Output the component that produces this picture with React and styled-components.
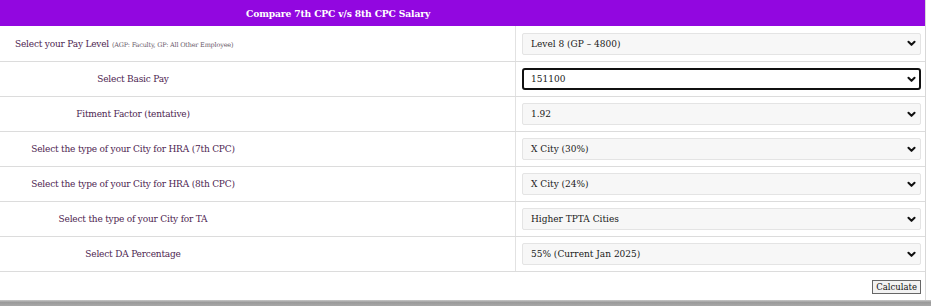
import React from 'react';
import styled, { createGlobalStyle } from 'styled-components';

const GlobalStyle = createGlobalStyle`
  html, body {
    margin: 0;
    padding: 0;
    background: #fff;
  }
  body {
    font-family: Georgia, "DejaVu Serif", "Liberation Serif", serif;
  }
`;

const Page = styled.div`
  width: 931px;
  height: 306px;
  background: #fff;
  display: flex;
  flex-direction: column;
`;

const Table = styled.div`
  width: 925px;
  border-right: 1px solid #d8d8d8;
  flex: 1;
  display: flex;
  flex-direction: column;
`;

const Header = styled.div`
  height: 26px;
  background: #9207e0;
  color: #fff;
  font-family: "DejaVu Serif", serif;
  font-weight: bold;
  font-size: 9.2px;
  display: flex;
  align-items: center;
  padding-left: 246px;
  letter-spacing: -0.15px;
`;

const Row = styled.div`
  display: grid;
  grid-template-columns: 516px 1fr;
  border-bottom: 1px solid #dcdcdc;
  box-sizing: border-box;
  height: ${p => (p.$first ? 36 : 35)}px;
`;

const LabelCell = styled.div`
  border-right: 1px solid #e2e2e2;
  display: flex;
  align-items: center;
  padding-left: ${p => (p.$left ? '15px' : '0')};
`;

const Label = styled.span`
  width: ${p => (p.$left ? 'auto' : '266px')};
  text-align: ${p => (p.$left ? 'left' : 'center')};
  color: #4d2450;
  font-family: "DejaVu Serif", serif;
  font-size: 9px;
  letter-spacing: -0.2px;
`;

const Hint = styled.span`
  color: #6a5a6a;
  font-size: 6.5px;
  margin-left: 3px;
`;

const SelectCell = styled.div`
  display: flex;
  align-items: center;
  padding-left: 6px;
  padding-right: 4px;
`;

const Select = styled.div`
  flex: 1;
  height: 22px;
  box-sizing: border-box;
  background: ${p => (p.$focused ? '#fff' : '#f7f7f7')};
  border: ${p => (p.$focused ? '2px solid #111' : '1px solid #e4e4e4')};
  border-radius: ${p => (p.$focused ? '3px' : '2px')};
  display: flex;
  align-items: center;
  justify-content: space-between;
  padding: 0 ${p => (p.$focused ? '3px' : '4px')} 0 ${p => (p.$focused ? '7px' : '8px')};
  font-family: "DejaVu Serif", serif;
  font-size: 9px;
  color: #1a1a1a;
`;

const Chevron = () => (
  <svg width="9" height="7" viewBox="0 0 10 8">
    <path d="M1.5 2 L5 5.5 L8.5 2" fill="none" stroke="#111" strokeWidth="2.3" strokeLinecap="round" strokeLinejoin="round" />
  </svg>
);

const Footer = styled.div`
  flex: 1;
  display: flex;
  justify-content: flex-end;
  align-items: flex-start;
  padding-top: 8px;
  padding-right: 4px;
`;

const Button = styled.button`
  height: 14px;
  padding: 0 3px;
  border: 1px solid #666;
  background: #f2f2f2;
  font-family: "DejaVu Serif", serif;
  font-size: 8.5px;
  color: #111;
  line-height: 12px;
  border-radius: 0;
`;

const Bottom = styled.div`
  height: 6px;
  background: linear-gradient(#c8c8c8, #9a9a9a 40%, #a8a8a8);
`;

const rows = [
  { label: 'Select your Pay Level', hint: '(AGP: Faculty, GP: All Other Employee)', value: 'Level 8 (GP – 4800)', left: true },
  { label: 'Select Basic Pay', value: '151100', focused: true },
  { label: 'Fitment Factor (tentative)', value: '1.92' },
  { label: 'Select the type of your City for HRA (7th CPC)', value: 'X City (30%)' },
  { label: 'Select the type of your City for HRA (8th CPC)', value: 'X City (24%)' },
  { label: 'Select the type of your City for TA', value: 'Higher TPTA Cities' },
  { label: 'Select DA Percentage', value: '55% (Current Jan 2025)' },
];

export default function App() {
  return (
    <Page>
      <GlobalStyle />
      <Table>
        <Header>Compare 7th CPC v/s 8th CPC Salary</Header>
        {rows.map((r, i) => (
          <Row key={i} $first={i === 0}>
            <LabelCell $left={r.left}>
              <Label $left={r.left}>
                {r.label}
                {r.hint && <Hint>{r.hint}</Hint>}
              </Label>
            </LabelCell>
            <SelectCell>
              <Select $focused={r.focused}>
                <span>{r.value}</span>
                <Chevron />
              </Select>
            </SelectCell>
          </Row>
        ))}
        <Footer>
          <Button>Calculate</Button>
        </Footer>
      </Table>
      <Bottom />
    </Page>
  );
}
